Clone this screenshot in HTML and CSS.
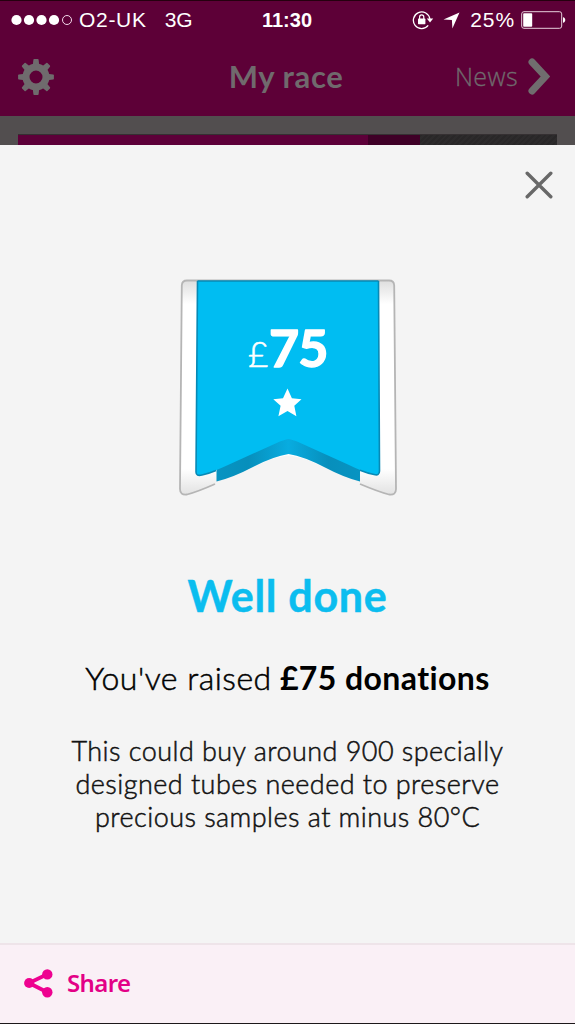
FILE: index.html
```html
<!DOCTYPE html>
<html lang="en">
<head>
  <meta charset="UTF-8">
  <meta name="viewport" content="width=device-width, initial-scale=1.0">
  <title>My race</title>
  <link rel="stylesheet" href="styles.css">
</head>
<body>
<div class="screen">
  <div class="status-bar">
    <div class="status-left">
      <svg class="signal" width="62" height="12" viewBox="0 0 62 12">
        <g fill="#fff">
          <circle cx="5.5" cy="6" r="5.1"/>
          <circle cx="18" cy="6" r="5.1"/>
          <circle cx="30.5" cy="6" r="5.1"/>
          <circle cx="43" cy="6" r="5.1"/>
        </g>
        <circle cx="56" cy="6" r="4.5" fill="none" stroke="#f3d9ea" stroke-width="1"/>
      </svg>
      <span class="carrier">O2-UK</span>
      <span class="network">3G</span>
    </div>
    <span class="clock">11:30</span>
    <div class="status-right">
      <svg class="lock" width="22" height="20" viewBox="0 0 22 20">
        <path d="M16.2 15.4A8.3 8.3 0 1 1 17.9 9" fill="none" stroke="#fff" stroke-width="1.3"/>
        <path d="M14.8 8.6h6.4l-3.2 4z" fill="#fff"/>
        <rect x="6" y="8.6" width="7.4" height="5.6" rx=".6" fill="#fff"/>
        <path d="M7.6 9V6.9a2.1 2.1 0 0 1 4.2 0V9" fill="none" stroke="#fff" stroke-width="1.2"/>
      </svg>
      <svg class="location" width="17" height="17" viewBox="0 0 17 17">
        <path d="M16.5 .5L9.4 16.5 8.9 8.1 .5 7.6z" fill="#fff"/>
      </svg>
      <span class="percent">25%</span>
      <svg class="battery" width="45" height="18" viewBox="0 0 45 18">
        <rect x=".7" y=".7" width="40" height="16.6" rx="2.2" fill="none" stroke="#e6cfdc" stroke-width="1"/>
        <rect x="2.2" y="2.2" width="9" height="13.6" rx=".8" fill="#fff"/>
        <path d="M42 6.2c3 .4 3 5.2 0 5.6z" fill="#fff"/>
      </svg>
    </div>
  </div>

  <div class="nav">
    <svg class="gear" width="36" height="36" viewBox="-18 -18 36 36">
      <defs>
        <path id="tooth" d="M-3.3 -11L-2.6 -17.2Q-2.5 -17.9 -1.8 -17.9H1.8Q2.5 -17.9 2.6 -17.2L3.3 -11z"/>
      </defs>
      <g fill="#6f6b6d">
        <use href="#tooth"/>
        <use href="#tooth" transform="rotate(45)"/>
        <use href="#tooth" transform="rotate(90)"/>
        <use href="#tooth" transform="rotate(135)"/>
        <use href="#tooth" transform="rotate(180)"/>
        <use href="#tooth" transform="rotate(225)"/>
        <use href="#tooth" transform="rotate(270)"/>
        <use href="#tooth" transform="rotate(315)"/>
      </g>
      <circle r="10" fill="none" stroke="#6f6b6d" stroke-width="7"/>
    </svg>
    <h1>My race</h1>
    <div class="news">
      <span>News</span>
      <svg width="22" height="37" viewBox="0 0 22 37">
        <path d="M4 4L17.5 18.5 4 33" fill="none" stroke="#706d6e" stroke-width="7" stroke-linecap="round"/>
      </svg>
    </div>
  </div>

  <div class="backdrop">
    <div class="progress">
      <div class="progress-raised"></div>
      <div class="progress-pending"></div>
    </div>
  </div>

  <div class="modal">
    <svg class="close" width="28" height="28" viewBox="0 0 28 28">
      <path d="M2.2 2.2L25.8 25.8M25.8 2.2L2.2 25.8" stroke="#686868" stroke-width="3.4" stroke-linecap="round"/>
    </svg>

    <svg class="badge" width="220" height="220" viewBox="0 0 220 220">
      <defs>
        <linearGradient id="paper" x1="0" y1="0" x2="0" y2="1">
          <stop offset="0" stop-color="#dedede"/>
          <stop offset=".11" stop-color="#fff"/>
          <stop offset=".88" stop-color="#fff"/>
          <stop offset="1" stop-color="#e2e2e2"/>
        </linearGradient>
        <linearGradient id="fold" x1="0" y1="0" x2="1" y2="0">
          <stop offset="0" stop-color="#0794c2"/>
          <stop offset=".22" stop-color="#078fbc"/>
          <stop offset=".5" stop-color="#08ace0"/>
          <stop offset=".78" stop-color="#078fbc"/>
          <stop offset="1" stop-color="#0794c2"/>
        </linearGradient>
      </defs>
      <path d="M9 2.5H211Q216 2.5 216.2 7.5L218 211Q218 217.5 211 216.5Q200 214 182 206V204Q172 201.5 163 197L130 182Q116 177.5 110.5 177.5Q105 177.5 91 182L58 197Q48 201.5 38 204V206Q20 214 9 216.5Q2 217.5 2 211L3.8 7.5Q4 2.5 9 2.5z" fill="url(#paper)"/>
      <path d="M37 206Q19 214 9 216.5Q2 217.5 2 211L3.8 7.5Q4 2.5 9 2.5H211Q216 2.5 216.2 7.5L218 211Q218 217.5 211 216.5Q201 214 182 206" fill="none" stroke="#b5b5b5" stroke-width="1.8"/>
      <path d="M38.5 188L110.5 155 182 188V203.6Q165 199 147 189.5Q126 178.500 110.500 176Q95 178.500 74 189.500Q56 199 38.500 203.6z" fill="url(#fold)"/>
      <path d="M19.5 3H200.5L201.5 193Q201.5 198 196 196.5Q185 194 171 187L119 163.500Q112.500 161 110.500 161Q108.500 161 102 163.500L50 187Q35 194 24 197Q18 198.5 18 194z" fill="#00bdf2"/>
      <path d="M19.5 3L18 194Q18 198.5 24 197Q31 195.5 38 192.5M200.5 3L201.5 193Q201.5 198 196 196.5Q190 195.5 182 192.3M19.5 3H200.5" fill="none" stroke="#0789b5" stroke-width="1.6"/>
      <text class="badge-pound" x="70" y="89">£</text>
      <text class="badge-amount" x="91" y="88.5">75</text>
      <path d="M109.5 110.5L113.9 120.3 123.5 121.2 116.3 127.7 118.4 138.2 109.5 132.9 100.4 138.2 102.6 127.7 95.3 121.2 105 120.3z" fill="#fff"/>
    </svg>

    <h2>Well done</h2>
    <p class="raised"><span>You've raised</span> <strong>£75 donations</strong></p>
    <p class="detail">This could buy around 900 specially<br>designed tubes needed to preserve<br>precious samples at minus 80°C</p>
  </div>

  <div class="share">
    <svg width="29" height="29" viewBox="0 0 29 29">
      <path d="M23.3 5.3L5 14 23.3 23.3" fill="none" stroke="#ee0290" stroke-width="3.8"/>
      <g fill="#ee0290">
        <circle cx="5.2" cy="14" r="5.1"/>
        <circle cx="23.3" cy="5.4" r="5.2"/>
        <circle cx="23.3" cy="23.3" r="5.2"/>
      </g>
    </svg>
    <span>Share</span>
  </div>
</div>
</body>
</html>
```
FILE: styles.css
```css
* {
  box-sizing: border-box;
}

body {
  margin: 0;
  background-color: #f4f4f4;
  color: #111;
  font-family: Lato, "Noto Sans", sans-serif;
  font-variant-ligatures: none;
}

h1, h2, p {
  margin: 0;
}

svg {
  display: block;
  flex-shrink: 0;
}

.screen {
  display: flex;
  flex-direction: column;
  width: 575px;
  height: 1024px;
  border-top: 1px solid #25000f;
  border-bottom: 1px solid #1c181a;
  overflow: hidden;
}

.status-bar {
  display: grid;
  grid-template-columns: 1fr auto 1fr;
  align-items: center;
  height: 38px;
  padding: 0 9px 0 11px;
  background-color: #5d0037;
  color: #fff;
  font-family: "Liberation Sans", Arial, sans-serif;
  font-size: 20px;
  line-height: 38px;
}

.status-left,
.status-right {
  display: flex;
  align-items: center;
}

.status-right {
  justify-content: flex-end;
}

.carrier {
  margin-left: 6px;
  font-size: 21px;
  letter-spacing: 0.7px;
}

.network {
  margin-left: 18px;
  font-size: 21px;
}

.clock {
  padding-right: 3px;
  font-weight: bold;
}

.lock {
  margin-right: 3px;
}

.location {
  margin-left: 7px;
}

.percent {
  margin-left: 10px;
  font-size: 21px;
  letter-spacing: 0.9px;
}

.battery {
  margin-left: 6px;
}

/* shift the lock and arrow left of the percentage together */
.status-right .lock {
  margin-right: 2px;
  margin-left: -5px;
}

.nav {
  display: grid;
  grid-template-columns: 1fr auto 1fr;
  align-items: center;
  height: 77px;
  padding: 0 25px 2px 18px;
  background-color: #5d0037;
  color: #706a6d;
}

.nav h1 {
  padding: 0 0 2px 4px;
  font-size: 31px;
  font-weight: 700;
  line-height: 38px;
  letter-spacing: 0.6px;
}

.news {
  display: flex;
  align-items: center;
  justify-content: flex-end;
  gap: 10px;
  font-family: "Open Sans", "Noto Sans", sans-serif;
  font-size: 25px;
  font-weight: 300;
  letter-spacing: 0.4px;
}

.news span {
  padding-bottom: 2px;
  -webkit-text-stroke: 0.3px #706a6d;
}

.backdrop {
  height: 29px;
  padding: 18px 18px 0;
  background-color: #524e4f;
}

.progress {
  display: flex;
  height: 11px;
  background: repeating-linear-gradient(135deg, #292728 0 2px, #2d2b2c 2px 4px);
  border-top: 1px solid #353032;
}

.progress-raised {
  width: 350px;
  background-color: #5d0039;
}

.progress-pending {
  width: 52px;
  background-color: #3f0027;
}

.modal {
  display: flex;
  flex-direction: column;
  align-items: center;
  height: 798px;
  padding-top: 26px;
  background-color: #f4f4f4;
  text-align: center;
}

.close {
  align-self: flex-end;
  margin-right: 22px;
}

.badge {
  margin-top: 79px;
}

.badge-pound,
.badge-amount {
  fill: #fff;
}

.badge-pound {
  font-size: 35px;
  font-weight: 300;
  stroke: #fff;
  stroke-width: 0.6px;
}

.badge-amount {
  font-size: 52px;
  font-weight: 700;
  letter-spacing: -1px;
  stroke: #fff;
  stroke-width: 1.4px;
  stroke-linejoin: round;
}

.modal h2 {
  margin-top: 71px;
  color: #0bbdef;
  font-size: 43px;
  font-weight: 700;
  line-height: 54px;
  letter-spacing: 0.7px;
  -webkit-text-stroke: 0.5px #0bbdef;
}

.raised {
  margin-top: 35px;
  color: #000;
  font-size: 32px;
  line-height: 40px;
}

.raised span {
  font-weight: 300;
  letter-spacing: 0.5px;
  -webkit-text-stroke: 0.5px #000;
}

.raised strong {
  letter-spacing: 0.4px;
}

.detail {
  margin-top: 36px;
  font-size: 27px;
  font-weight: 300;
  line-height: 33px;
  letter-spacing: 0.45px;
  -webkit-text-stroke: 0.5px #111;
}

.share {
  display: flex;
  align-items: center;
  gap: 14px;
  height: 80px;
  padding: 0 24px 2px;
  background-color: #faf0f6;
  border-top: 2px solid #eee4e9;
  color: #e30086;
  font-family: "Noto Sans", sans-serif;
  font-size: 24px;
  font-weight: 600;
  letter-spacing: -0.6px;
}

.share span {
  padding-bottom: 1px;
}
```
